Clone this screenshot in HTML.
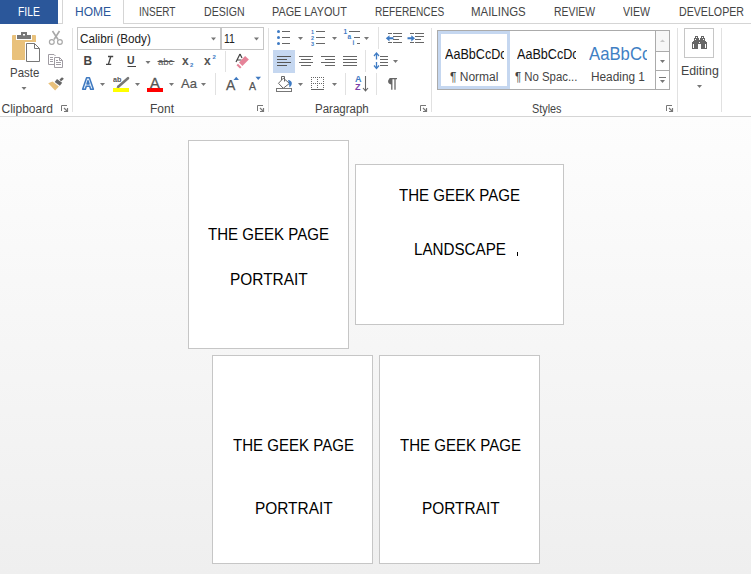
<!DOCTYPE html>
<html><head><meta charset="utf-8">
<style>
html,body{margin:0;padding:0;}
body{width:751px;height:574px;overflow:hidden;position:relative;background:#fff;font-family:"Liberation Sans",sans-serif;}
.a{position:absolute;}
.t{position:absolute;white-space:nowrap;transform-origin:0 0;line-height:1;}
.tab{color:#444;font-size:12px;}
.vs{position:absolute;width:1px;background:#e1e1e1;}
.lbl{color:#444;font-size:12px;}
.doc{position:absolute;left:0;top:117px;width:751px;height:457px;
 background:linear-gradient(#fdfdfd,#efefef);}
.pg{position:absolute;background:#fff;border:1px solid #c6c6c6;box-sizing:border-box;}
.pt{position:absolute;white-space:nowrap;font-size:16px;line-height:1;color:#000;transform-origin:0 0;transform:scaleX(0.94);}
</style></head>
<body>
<!-- tabs row -->
<div class="a" style="left:0;top:0;width:58px;height:24px;background:#2b579a;"></div>
<div class="t" style="left:17.5px;top:5px;font-size:13px;color:#fff;transform:scaleX(0.8)">FILE</div>
<div class="a" style="left:62px;top:0;width:62px;height:24px;border-left:1px solid #d5d5d5;border-right:1px solid #d5d5d5;box-sizing:border-box;background:#fff;"></div>
<div class="t" style="left:75px;top:6px;font-size:12px;color:#2b579a;">HOME</div>
<div class="a" style="left:58px;top:23px;width:4px;height:1px;background:#d5d5d5;"></div>
<div class="a" style="left:124px;top:23px;width:627px;height:1px;background:#d5d5d5;"></div>
<div class="t tab" style="left:139px;top:6px;transform:scaleX(0.833)">INSERT</div>
<div class="t tab" style="left:204px;top:6px;transform:scaleX(0.882)">DESIGN</div>
<div class="t tab" style="left:272px;top:6px;transform:scaleX(0.902)">PAGE LAYOUT</div>
<div class="t tab" style="left:375px;top:6px;transform:scaleX(0.843)">REFERENCES</div>
<div class="t tab" style="left:471px;top:6px;transform:scaleX(0.955)">MAILINGS</div>
<div class="t tab" style="left:554px;top:6px;transform:scaleX(0.867)">REVIEW</div>
<div class="t tab" style="left:623px;top:6px;transform:scaleX(0.884)">VIEW</div>
<div class="t tab" style="left:679px;top:6px;transform:scaleX(0.886)">DEVELOPER</div>

<!-- ribbon bottom border -->
<div class="a" style="left:0;top:116px;width:751px;height:1px;background:#d5d5d5;"></div>

<!-- group separators -->
<div class="vs" style="left:72px;top:28px;height:84px;"></div>
<div class="vs" style="left:268px;top:28px;height:84px;"></div>
<div class="vs" style="left:431px;top:28px;height:84px;"></div>
<div class="vs" style="left:677px;top:28px;height:84px;"></div>
<div class="vs" style="left:721px;top:28px;height:84px;"></div>


<svg class="a" style="left:0;top:0" width="751" height="117" viewBox="0 0 751 117" shape-rendering="auto">
<defs>
 <g id="dl"><path d="M0.5,6 V0.5 H6" fill="none" stroke="#777" stroke-width="1"/><path d="M3,3 L6.5,6.5 M6.5,3 V6.5 H3" fill="none" stroke="#777" stroke-width="1.2"/></g>
 <path id="dd" d="M0,0 H5 L2.5,3 Z" fill="#777"/>
</defs>
<!-- Paste icon -->
<rect x="12" y="35" width="24" height="25" rx="1" fill="#e9c17b"/>
<rect x="16" y="34" width="16" height="6" fill="#fff"/>
<rect x="17" y="35" width="14" height="4" fill="#777"/>
<rect x="21" y="32" width="6" height="4" fill="#777"/>
<rect x="23" y="34" width="2" height="1.5" fill="#fff"/>
<rect x="25" y="42" width="16" height="21" fill="#fff"/>
<path d="M26.5,43.5 H34.5 L39.5,48.5 V61.5 H26.5 Z" fill="#fff" stroke="#777" stroke-width="1"/>
<path d="M34.5,43.5 V48.5 H39.5" fill="none" stroke="#777" stroke-width="1"/>
<use href="#dd" x="21.5" y="87"/>
<!-- scissors -->
<path d="M52.5,31 L58,39.5 M59.5,31 L54,39.5" stroke="#a8a8a8" stroke-width="1.6" fill="none"/>
<circle cx="51.8" cy="42" r="2.4" stroke="#a8a8a8" stroke-width="1.2" fill="none"/>
<circle cx="59.9" cy="42" r="2.4" stroke="#a8a8a8" stroke-width="1.2" fill="none"/>
<!-- copy -->
<path d="M54.5,64.5 H48.5 V54.5 H54 L55.5,56" fill="none" stroke="#a09ca3" stroke-width="1"/>
<path d="M50,57.5 H53 M50,59.5 H53 M50,61.5 H53" stroke="#a09ca3" stroke-width="1"/>
<path d="M54.5,57.5 H59.5 L62.5,60.5 V67.5 H54.5 Z" fill="#fff" stroke="#a09ca3" stroke-width="1"/><path d="M59.5,57.5 V60.5 H62.5" fill="none" stroke="#a09ca3" stroke-width="1"/>
<path d="M56,60.5 H58 M56,62.5 H61 M56,64.5 H61" stroke="#a09ca3" stroke-width="1"/>
<!-- format painter -->
<path d="M48.2,83.3 L52.6,81.6 L58.9,86.6 L55.1,90.6 Z" fill="#e9c17b"/>
<path d="M57,78.9 L62.2,82.7 L59.9,85.7 L54.7,81.9 Z" fill="#666"/>
<path d="M59.5,79.5 L62,77.2 L63.9,78.7 L60.9,81.4 Z" fill="#666"/>
<use href="#dl" x="61" y="105"/>

<!-- font group -->
<rect x="77.5" y="27.5" width="143" height="22" fill="#fff" stroke="#c6c6c6"/>
<rect x="221.5" y="27.5" width="42" height="22" fill="#fff" stroke="#c6c6c6"/>
<use href="#dd" x="211" y="37.5"/>
<use href="#dd" x="254" y="37.5"/>
<use href="#dd" x="145.5" y="61"/>
<path d="M240,54 L236,62 M240,54 L242,58 M237,60 H241.5" stroke="#444" stroke-width="1.2" fill="none"/>
<path d="M245.1,56.1 L248.9,59.5 L242.4,66 L239,62.4 Z" fill="#e58398"/>
<path d="M238,63.8 L241.5,67.2 L240,68.6 L236.5,65.2 Z" fill="#e58398"/>
<line x1="225.5" y1="51" x2="225.5" y2="72" stroke="#e1e1e1"/>
<!-- text effects A -->
<path d="M82.6,89.2 L86.6,77.8 H89.4 L93.4,89.2 H90.6 L89.7,86.3 H86.3 L85.4,89.2 Z M87,84 H89 L88,80.8 Z" fill="#e4eef9" stroke="#3f79c0" stroke-width="1.5" stroke-linejoin="round"/>
<use href="#dd" x="100" y="83"/>
<!-- highlighter -->
<path d="M118.5,86.5 L128,78.2" stroke="#fff" stroke-width="4.5"/><path d="M118.5,86.5 L128,78.2" stroke="#777" stroke-width="2.6" stroke-linecap="round"/><path d="M116.5,88 L117.5,85.5 L119.5,87.5 Z" fill="#777"/>
<rect x="113" y="88" width="16" height="4" fill="#ffff00"/>
<use href="#dd" x="135" y="83"/>
<!-- font color -->
<rect x="147" y="88" width="16" height="4" fill="#ff0000"/>
<use href="#dd" x="169" y="83"/>
<use href="#dd" x="201" y="83"/>
<line x1="215.5" y1="73" x2="215.5" y2="95" stroke="#e1e1e1"/>
<path d="M233.5,80 L239,80 L236.25,76.7 Z" fill="#3f79c0"/>
<path d="M255.5,76.7 L261,76.7 L258.25,80 Z" fill="#3f79c0"/>
<use href="#dl" x="257" y="105"/>

<!-- paragraph group -->
<circle cx="278.5" cy="31.5" r="1.5" fill="#3e7bc4"/>
<circle cx="278.5" cy="37.5" r="1.5" fill="#3e7bc4"/>
<circle cx="278.5" cy="43.5" r="1.5" fill="#3e7bc4"/>
<path d="M282,31.5 H290 M282,37.5 H290 M282,43.5 H290" stroke="#666" stroke-width="1"/>
<use href="#dd" x="298" y="37"/>
<path d="M316,31.5 H325 M316,37.5 H325 M316,43.5 H325" stroke="#666" stroke-width="1"/>
<use href="#dd" x="332" y="37"/>
<path d="M349,31.5 H360 M354,37.5 H360 M357,43.5 H360" stroke="#666" stroke-width="1"/>
<use href="#dd" x="364" y="37"/>
<line x1="378.5" y1="27" x2="378.5" y2="49" stroke="#e1e1e1"/>
<!-- indent -->
<path d="M388,33.5 H392 M393,33.5 H402 M393,36.5 H402 M393,39.5 H399 M388,42.5 H392 M393,42.5 H402" stroke="#666" stroke-width="1"/>
<path d="M385.8,38.3 L389.5,35.2 V37.3 H393.5 V39.3 H389.5 V41.4 Z" fill="#3e7bc4"/>
<path d="M410,33.5 H414 M415,33.5 H424 M415,36.5 H424 M415,39.5 H421 M410,42.5 H414 M415,42.5 H424" stroke="#666" stroke-width="1"/>
<path d="M415,38.3 L411.3,35.2 V37.3 H407.5 V39.3 H411.3 V41.4 Z" fill="#3e7bc4"/>
<!-- align -->
<rect x="273" y="50" width="22" height="23" fill="#c5d7f0"/>
<path d="M277,56.5 H291 M277,59.5 H287 M277,62.5 H291 M277,65.5 H287" stroke="#555" stroke-width="1"/>
<path d="M299,56.5 H313 M301,59.5 H311 M299,62.5 H313 M301,65.5 H311" stroke="#666" stroke-width="1"/>
<path d="M321,56.5 H335 M325,59.5 H335 M321,62.5 H335 M325,65.5 H335" stroke="#666" stroke-width="1"/>
<path d="M343,56.5 H357 M343,59.5 H357 M343,62.5 H357 M343,65.5 H357" stroke="#666" stroke-width="1"/>
<line x1="365.5" y1="50" x2="365.5" y2="72" stroke="#e1e1e1"/>
<!-- line spacing -->
<path d="M376.5,54 V59.5 M376.5,62 V68" stroke="#3e7bc4" stroke-width="1.3"/>
<path d="M374,56 L376.5,53 L379,56 M374,65.5 L376.5,68.5 L379,65.5" stroke="#3e7bc4" stroke-width="1.2" fill="none"/>
<path d="M380,56.5 H388 M380,59.5 H388 M380,62.5 H388 M380,65.5 H388" stroke="#666" stroke-width="1"/>
<use href="#dd" x="393" y="60"/>
<!-- shading -->
<path d="M278.5,83.3 L283.3,78.2 L289.5,83.3 L283.3,88.3 Z" fill="#fff" stroke="#666" stroke-width="1"/>
<path d="M281.5,80 V76.5 H284.5 V81.5" fill="none" stroke="#666" stroke-width="1"/>
<path d="M288,80 C292.5,80.5 293,84.5 289.5,87.5 L289,83.5 Z" fill="#3e7bc4"/>
<rect x="276.5" y="88.5" width="15" height="3" fill="#fff" stroke="#777"/>
<use href="#dd" x="298" y="83"/>
<!-- borders -->
<path d="M311,77h1v1h-1zM313,77h1v1h-1zM315,77h1v1h-1zM317,77h1v1h-1zM319,77h1v1h-1zM321,77h1v1h-1zM323,77h1v1h-1zM311,79h1v1h-1zM317,79h1v1h-1zM323,79h1v1h-1zM311,81h1v1h-1zM317,81h1v1h-1zM323,81h1v1h-1zM311,83h1v1h-1zM313,83h1v1h-1zM315,83h1v1h-1zM317,83h1v1h-1zM319,83h1v1h-1zM321,83h1v1h-1zM323,83h1v1h-1zM311,85h1v1h-1zM317,85h1v1h-1zM323,85h1v1h-1zM311,87h1v1h-1zM317,87h1v1h-1zM323,87h1v1h-1z" fill="#666"/>
<rect x="311" y="89" width="13" height="1" fill="#666"/>
<use href="#dd" x="332" y="83"/>
<line x1="345.5" y1="73" x2="345.5" y2="95" stroke="#e1e1e1"/>
<path d="M365.5,76 V90.5 M363,88 L365.5,90.8 L368,88" stroke="#666" stroke-width="1.1" fill="none"/>
<line x1="376.5" y1="73" x2="376.5" y2="95" stroke="#e1e1e1"/>
<use href="#dl" x="420" y="105"/>

<!-- styles gallery -->
<rect x="437.5" y="30.5" width="232" height="59" fill="#fff" stroke="#ababab"/>
<rect x="439.5" y="32.5" width="69" height="55" fill="#fff" stroke="#c5d7f0" stroke-width="3"/>
<rect x="655.5" y="30.5" width="14" height="21" fill="#f7f7f7" stroke="#ababab"/>
<rect x="655.5" y="51.5" width="14" height="19" fill="#fff" stroke="#ababab"/>
<rect x="655.5" y="70.5" width="14" height="19" fill="#fff" stroke="#ababab"/>
<path d="M660,42 H665 L662.5,39.5 Z" fill="#c8c8c8"/>
<use href="#dd" x="660" y="60"/>
<path d="M659,77.5 H666" stroke="#777"/>
<use href="#dd" x="660" y="80"/>
<use href="#dl" x="666" y="105"/>

<!-- editing -->
<rect x="684.5" y="28.5" width="29" height="29" fill="#fff" stroke="#c6c6c6"/>
<path d="M695,36h3v1h-3zM701,36h3v1h-3zM695,37h3v1h-3zM701,37h3v1h-3zM694,38h5v1h-5zM700,38h5v1h-5zM694,39h5v1h-5zM700,39h5v1h-5zM694,40h11v1h-11zM693,41h13v1h-13zM692,42h15v1h-15zM692,43h15v1h-15zM692,44h6v1h-6zM701,44h6v1h-6zM692,45h6v1h-6zM701,45h6v1h-6zM692,46h6v1h-6zM701,46h6v1h-6zM692,47h6v1h-6zM701,47h6v1h-6zM692,48h6v1h-6zM701,48h6v1h-6z" fill="#666"/>
<path d="M696,37h1v1h-1zM702,37h1v1h-1zM695,39h1v1h-1zM703,39h1v1h-1zM699,42h1v1h-1zM693,44h1v1h-1zM693,45h1v1h-1zM693,46h1v1h-1zM693,47h1v1h-1zM705,44h1v1h-1zM705,45h1v1h-1zM705,46h1v1h-1zM705,47h1v1h-1z" fill="#fff"/>
<use href="#dd" x="697" y="85"/>

<path d="M108,56.5 H113.2 M106,64.3 H111.2 M110.8,56.5 L108.4,64.3" stroke="#444" stroke-width="1.3" fill="none"/>
<path d="M127.5,66.5 H136" stroke="#444" stroke-width="1"/>
<path d="M157.5,61.5 H174.5" stroke="#555" stroke-width="1"/>
<path d="M389.5,78.6 H397 M391.8,78.5 V89.7 M395,78.5 V89.7" stroke="#666" stroke-width="1.3" fill="none"/>
<path d="M392,78 C387,78 386.5,84.5 392,84.5 Z" fill="#666"/>
</svg>

<div class="t" style="left:10px;top:66px;font-size:13px;color:#444;transform:scaleX(0.88)">Paste</div>
<div class="t" style="left:80px;top:32px;font-size:13px;color:#222;transform:scaleX(0.9)">Calibri (Body)</div>
<div class="t" style="left:224px;top:32px;font-size:13px;color:#222;transform:scaleX(0.8)">11</div>
<div class="t" style="left:83.5px;top:55px;font-size:12px;color:#444;font-weight:bold;">B</div>

<div class="t" style="left:127px;top:55px;font-size:10.5px;color:#444;font-weight:bold;">U</div>
<div class="t" style="left:158px;top:57px;font-size:9.5px;color:#555;transform:scaleX(1.0)">abc</div>
<div class="t" style="left:182px;top:55px;font-size:12px;color:#555;font-weight:bold;">x</div>
<div class="t" style="left:190px;top:62px;font-size:6px;color:#3e7bc4;font-weight:bold;">2</div>
<div class="t" style="left:204px;top:55px;font-size:12px;color:#555;font-weight:bold;">x</div>
<div class="t" style="left:212.5px;top:53.5px;font-size:6px;color:#3e7bc4;font-weight:bold;">2</div>
<div class="t" style="left:113px;top:75.5px;font-size:8px;color:#555;font-weight:bold;transform:scaleX(0.9)">ab</div>
<div class="t" style="left:150px;top:76px;font-size:14.5px;color:#555;-webkit-text-stroke:0.3px #555">A</div>
<div class="t" style="left:181px;top:77px;font-size:13px;color:#555;-webkit-text-stroke:0.2px #555">Aa</div>
<div class="t" style="left:226px;top:77.5px;font-size:14px;color:#555;-webkit-text-stroke:0.25px #555">A</div>
<div class="t" style="left:249px;top:81px;font-size:10.5px;color:#555;-webkit-text-stroke:0.25px #555">A</div>
<div class="t" style="left:311px;top:29px;font-size:5.5px;color:#3e7bc4;font-weight:bold;line-height:6px;">1<br>2<br>3</div>
<div class="t" style="left:343.5px;top:29px;font-size:6.5px;color:#3e7bc4;font-weight:bold;">1</div>
<div class="t" style="left:347.5px;top:33.5px;font-size:6.5px;color:#3e7bc4;font-weight:bold;">a</div>
<div class="t" style="left:352.5px;top:40px;font-size:6.5px;color:#3e7bc4;font-weight:bold;">i</div>
<div class="t" style="left:355px;top:75px;font-size:9px;color:#3e7bc4;font-weight:bold;">A</div>
<div class="t" style="left:355px;top:83px;font-size:9px;color:#7b3fa8;font-weight:bold;">Z</div>

<div class="a" style="left:440px;top:40px;width:64px;height:22px;overflow:hidden"><div class="t" style="left:5px;top:7px;font-size:14px;color:#111;transform:scaleX(0.9)">AaBbCcDc</div></div>
<div class="t" style="left:450px;top:71px;font-size:12px;color:#444;transform:scaleX(1.0)">&para; Normal</div>
<div class="a" style="left:510px;top:40px;width:66px;height:22px;overflow:hidden"><div class="t" style="left:7px;top:7px;font-size:14px;color:#111;transform:scaleX(0.9)">AaBbCcDc</div></div>
<div class="t" style="left:515px;top:71px;font-size:12px;color:#444;transform:scaleX(0.948)">&para; No Spac...</div>
<div class="a" style="left:580px;top:38px;width:67px;height:26px;overflow:hidden"><div class="t" style="left:9px;top:6px;font-size:19px;color:#3f80c4;transform:scaleX(0.88)">AaBbCc</div></div>
<div class="t" style="left:591px;top:71px;font-size:12px;color:#444;transform:scaleX(0.985)">Heading 1</div>
<div class="t" style="left:681px;top:64px;font-size:13px;color:#444;transform:scaleX(0.95)">Editing</div>

<!-- group labels -->
<div class="t lbl" style="left:1.5px;top:103px;">Clipboard</div>
<div class="t lbl" style="left:150px;top:103px;">Font</div>
<div class="t lbl" style="left:315px;top:103px;transform:scaleX(0.959)">Paragraph</div>
<div class="t lbl" style="left:532px;top:103px;transform:scaleX(0.903)">Styles</div>

<!-- document area -->
<div class="doc"></div>
<div class="pg" style="left:188px;top:140px;width:161px;height:209px;"></div>
<div class="pg" style="left:355px;top:164px;width:209px;height:161px;"></div>
<div class="pg" style="left:212px;top:355px;width:161px;height:209px;"></div>
<div class="pg" style="left:379px;top:355px;width:161px;height:209px;"></div>

<div class="pt" style="left:208px;top:227px;">THE GEEK PAGE</div>
<div class="pt" style="left:230px;top:272px;transform:scaleX(0.965)">PORTRAIT</div>
<div class="pt" style="left:399px;top:188px;">THE GEEK PAGE</div>
<div class="pt" style="left:414px;top:242px;transform:scaleX(0.948)">LANDSCAPE</div>
<div class="pt" style="left:233px;top:438px;">THE GEEK PAGE</div>
<div class="pt" style="left:254.5px;top:501px;transform:scaleX(0.963)">PORTRAIT</div>
<div class="pt" style="left:400px;top:438px;">THE GEEK PAGE</div>
<div class="pt" style="left:421.5px;top:501px;transform:scaleX(0.963)">PORTRAIT</div>
<div class="a" style="left:517px;top:252px;width:1px;height:4px;background:#000"></div>
</body></html>
